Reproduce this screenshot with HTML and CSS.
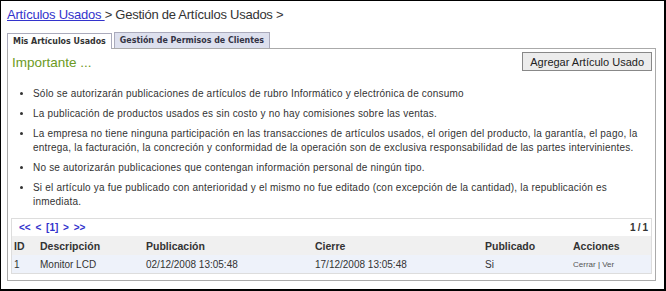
FILE: index.html
```html
<!DOCTYPE html>
<html lang="es">
<head>
    <meta charset="UTF-8">
    <title>Gestión de Artículos Usados</title>
    <link rel="stylesheet" href="styles.css">
</head>
<body>
    <div class="page">
        <div class="breadcrumb">
            <a href="#">Artículos Usados </a> &gt; Gestión de Artículos Usados &gt;
        </div>

        <div class="tabs">
            <span class="tab active">Mis Artículos Usados</span>
            <span class="tab">Gestión de Permisos de Clientes</span>
        </div>

        <div class="panel">
            <div class="panel-head">
                <h2>Importante ...</h2>
                <button class="btn">Agregar Artículo Usado</button>
            </div>

            <ul class="notes">
                <li>Sólo se autorizarán publicaciones de artículos de rubro Informático y electrónica de consumo</li>
                <li>La publicación de productos usados es sin costo y no hay comisiones sobre las ventas.</li>
                <li>La empresa no tiene ninguna participación en las transacciones de artículos usados, el origen del producto, la garantía, el pago, la entrega, la facturación, la concreción y conformidad de la operación son de exclusiva responsabilidad de las partes intervinientes.</li>
                <li>No se autorizarán publicaciones que contengan información personal de ningún tipo.</li>
                <li>Si el artículo ya fue publicado con anterioridad y el mismo no fue editado (con excepción de la cantidad), la republicación es inmediata.</li>
            </ul>

            <div class="grid">
                <div class="pager">
                    <span class="pages"><a href="#">&lt;&lt;</a> <a href="#">&lt;</a> <b>[1]</b> <a href="#">&gt;</a> <a href="#">&gt;&gt;</a></span>
                    <span class="count">1&thinsp;/&thinsp;1</span>
                </div>
                <table>
                    <tr>
                        <th class="c-id">ID</th>
                        <th class="c-desc">Descripción</th>
                        <th class="c-pub">Publicación</th>
                        <th class="c-cie">Cierre</th>
                        <th class="c-est">Publicado</th>
                        <th>Acciones</th>
                    </tr>
                    <tr class="row">
                        <td>1</td>
                        <td>Monitor LCD</td>
                        <td>02/12/2008 13:05:48</td>
                        <td>17/12/2008 13:05:48</td>
                        <td>Si</td>
                        <td class="actions"><a href="#">Cerrar</a> | <a href="#">Ver</a></td>
                    </tr>
                </table>
            </div>
        </div>
    </div>
</body>
</html>
```

FILE: styles.css
```css
body {
    margin: 0;
    font-family: "Liberation Sans", Arial, sans-serif;
    background: #fff;
}

.page {
    box-sizing: border-box;
    width: 666px;
    height: 291px;
    border-top: 1px solid #000;
    border-left: 1px solid #000;
    border-right: 2px solid #000;
    border-bottom: 2px solid #000;
    padding: 4px 8px 0 6px;
}

.breadcrumb {
    font-size: 13px;
    letter-spacing: -0.25px;
    color: #333;
    height: 22px;
    line-height: 19px;
}

.breadcrumb a {
    color: #3333cc;
}

.tabs {
    display: flex;
    gap: 2px;
    margin-top: 5px;
    height: 16px;
}

.tab {
    font-family: "DejaVu Sans Condensed", "DejaVu Sans", sans-serif;
    font-weight: bold;
    font-size: 8.8px;
    color: #334;
    background: #dde0ee;
    border: 1px solid #aab;
    border-bottom: none;
    padding: 0 5px;
    line-height: 15px;
}

.tab.active {
    background: #fff;
    color: #333;
    position: relative;
    top: 1px;
}

.panel {
    border: 1px solid #aaa;
    height: 228px;
    padding: 3px 3px 0 3px;
}

.panel-head {
    display: flex;
    justify-content: space-between;
    align-items: flex-start;
}

.panel-head h2 {
    margin: 3px 0 0 1px;
    font-size: 13.5px;
    font-weight: normal;
    color: #6c9a23;
}

.btn {
    font-family: "Liberation Sans", Arial, sans-serif;
    font-size: 11px;
    color: #222;
    background: #ececec;
    border: 1px solid #888;
    border-radius: 0;
    height: 19px;
    padding: 0 7px;
}

.notes {
    margin: 16px 0 0 0;
    padding: 0 4px 0 22px;
    font-size: 10px;
    letter-spacing: 0.2px;
    color: #333;
    line-height: 14px;
}

.notes li {
    margin-bottom: 6px;
}

.notes li:last-child {
    margin-bottom: 0;
}

.grid {
    margin-top: 9px;
    border: 1px solid #ddd;
    font-size: 10px;
    color: #333;
}

.pager {
    display: flex;
    justify-content: space-between;
    padding: 3px 3px 3px 7px;
    font-weight: bold;
    font-size: 10px;
    line-height: 11px;
}

.pages {
    word-spacing: 2px;
}

.pager a {
    color: #3333cc;
    text-decoration: none;
}

.pages b {
    color: #3333cc;
}

table {
    width: 100%;
    border-collapse: collapse;
}

th {
    text-align: left;
    background: #f0f0f0;
    padding: 2px 2px;
    height: 15px;
    font-size: 10.5px;
}

td {
    padding: 2px 2px;
    height: 14px;
}

.row td {
    background: #eef2fa;
}

.c-id { width: 22px; }
.c-desc { width: 102px; }
.c-pub { width: 165px; }
.c-cie { width: 166px; }
.c-est { width: 84px; }

.actions {
    font-size: 8px;
}

.actions a {
    color: #555;
    text-decoration: none;
}
```
